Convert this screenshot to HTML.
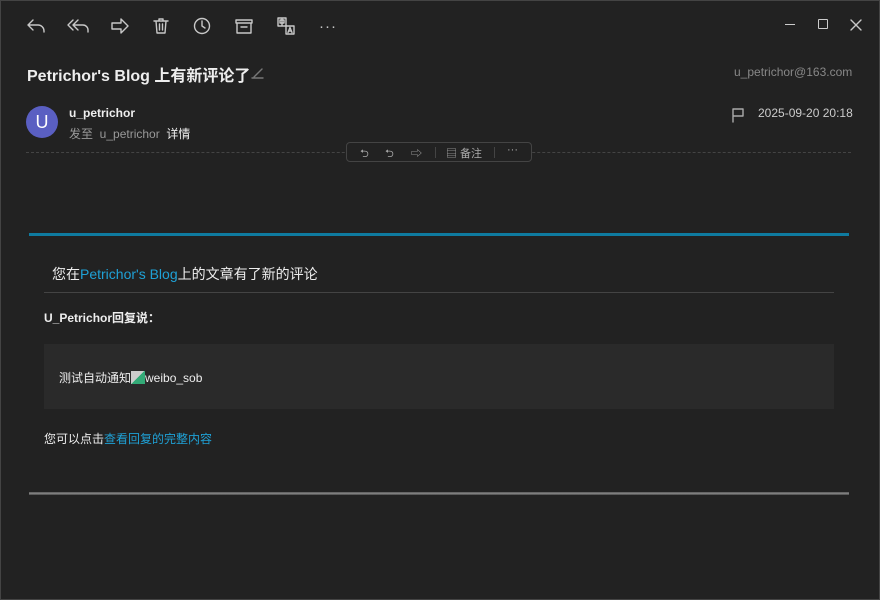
<!DOCTYPE html>
<html><head><meta charset="utf-8"><style>
*{margin:0;padding:0;box-sizing:border-box}
html,body{width:880px;height:600px;overflow:hidden;background:#222}
body{font-family:"Liberation Sans","Noto Sans CJK SC",sans-serif;color:#ddd;position:relative;border:1px solid #444}
.a{position:absolute}
svg.i{position:absolute;fill:none;stroke:#c8c8c8;stroke-width:1.4;stroke-linecap:round;stroke-linejoin:round}
</style></head><body>
<svg class="i" style="left:24px;top:15px" width="22" height="20" viewBox="0 0 22 20"><path d="M8 4L3 9l5 5M3 9h10a6 6 0 0 1 6 6v1"/></svg>
<svg class="i" style="left:65px;top:15px" width="24" height="20" viewBox="0 0 24 20"><path d="M7 4L2 9l5 5M12 4L7 9l5 5M7 9h10a5 5 0 0 1 5 5v2"/></svg>
<svg class="i" style="left:108px;top:15px" width="22" height="20" viewBox="0 0 22 20"><path d="M3 7h9V3l7 7-7 7v-4H3z"/></svg>
<svg class="i" style="left:150px;top:15px" width="20" height="20" viewBox="0 0 20 20"><path d="M3 5h14M8 5V3h4v2M5 5l1 12h8l1-12M8.5 8v6M11.5 8v6"/></svg>
<svg class="i" style="left:191px;top:15px" width="20" height="20" viewBox="0 0 20 20"><circle cx="10" cy="10" r="7.5"/><path d="M10 5v5l3 2"/></svg>
<svg class="i" style="left:233px;top:15px" width="20" height="20" viewBox="0 0 20 20"><path d="M2 4h16v3H2zM3 7v10h14V7M7 11h6"/></svg>
<svg class="i" style="left:275px;top:15px" width="20" height="20" viewBox="0 0 20 20" stroke-width="1.1"><path d="M2 2h8v8H2zM4 4h4v3H4zM6 3v6M10 10h8v8h-8zM12 16.5l2-5 2 5M12.7 15h2.6"/></svg>
<div class="a" style="left:318px;top:17px;color:#c8c8c8;font-size:15px;letter-spacing:1px">···</div>
<div class="a" style="left:784px;top:23px;width:10px;height:1.3px;background:#ccc"></div>
<div class="a" style="left:817px;top:18px;width:10px;height:10px;border:1.3px solid #ccc;border-radius:1px"></div>
<svg class="i" style="left:849px;top:18px" width="12" height="12" viewBox="0 0 12 12"><path d="M1 1l10 10M11 1L1 11"/></svg>

<div class="a" style="left:26px;top:61px;font-size:16px;font-weight:bold;color:#eee">Petrichor's Blog 上有新评论了</div>
<svg class="i" style="left:250px;top:66px;stroke:#777" width="14" height="12" viewBox="0 0 14 12"><path d="M1 11h11M3 10l8-8"/></svg>
<div class="a" style="left:733px;top:64px;font-size:12px;color:#888">u_petrichor@163.com</div>

<div class="a" style="left:25px;top:105px;width:32px;height:32px;border-radius:50%;background:#5a5fc2;color:#fff;font-size:18px;text-align:center;line-height:32px">U</div>
<div class="a" style="left:68px;top:105px;font-size:12px;font-weight:bold;color:#eee">u_petrichor</div>
<div class="a" style="left:68px;top:124px;font-size:12px;color:#999">发至 &nbsp;u_petrichor &nbsp;<span style="color:#eee">详情</span></div>
<svg class="i" style="left:730px;top:106px;stroke:#aaa" width="14" height="16" viewBox="0 0 14 16"><path d="M2 15V2h10v7H2"/></svg>
<div class="a" style="left:757px;top:105px;font-size:12px;color:#ccc">2025-09-20 20:18</div>

<div class="a" style="left:25px;top:151px;width:825px;border-top:1px dashed #444"></div>
<div class="a" style="left:345px;top:141px;width:186px;height:20px;border:1px solid #444;border-radius:4px;background:#222;font-size:11px;color:#aaa">
<span class="a" style="left:13px;top:2px">⮌</span><span class="a" style="left:38px;top:2px">⮌</span><span class="a" style="left:64px;top:2px">⇨</span>
<span class="a" style="left:88px;top:4px;height:11px;border-left:1px solid #444"></span>
<span class="a" style="left:99px;top:2px">▤ 备注</span>
<span class="a" style="left:147px;top:4px;height:11px;border-left:1px solid #444"></span>
<span class="a" style="left:160px;top:1px">···</span></div>

<div class="a" style="left:28px;top:232px;width:820px;height:3px;background:#0f7ba0"></div>
<div class="a" style="left:51px;top:263px;font-size:14px;color:#eee">您在<span style="color:#1fa1d6">Petrichor's Blog</span>上的文章有了新的评论</div>
<div class="a" style="left:43px;top:291px;width:790px;border-top:1px solid #444"></div>
<div class="a" style="left:43px;top:308px;font-size:12px;font-weight:bold;color:#eee">U_Petrichor回复说：</div>
<div class="a" style="left:43px;top:343px;width:790px;height:65px;background:#2a2a2a"></div>
<div class="a" style="left:58px;top:368px;font-size:12px;color:#eee">测试自动通知<span style="display:inline-block;width:14px;height:13px;vertical-align:-2px;background:linear-gradient(135deg,#ccc 50%,#3a7 50%)"></span>weibo_sob</div>
<div class="a" style="left:43px;top:429px;font-size:12px;color:#eee">您可以点击<span style="color:#1fa1d6">查看回复的完整内容</span></div>
<div class="a" style="left:28px;top:491px;width:820px;height:3px;background:linear-gradient(#555,#888,#444)"></div>
</body></html>
